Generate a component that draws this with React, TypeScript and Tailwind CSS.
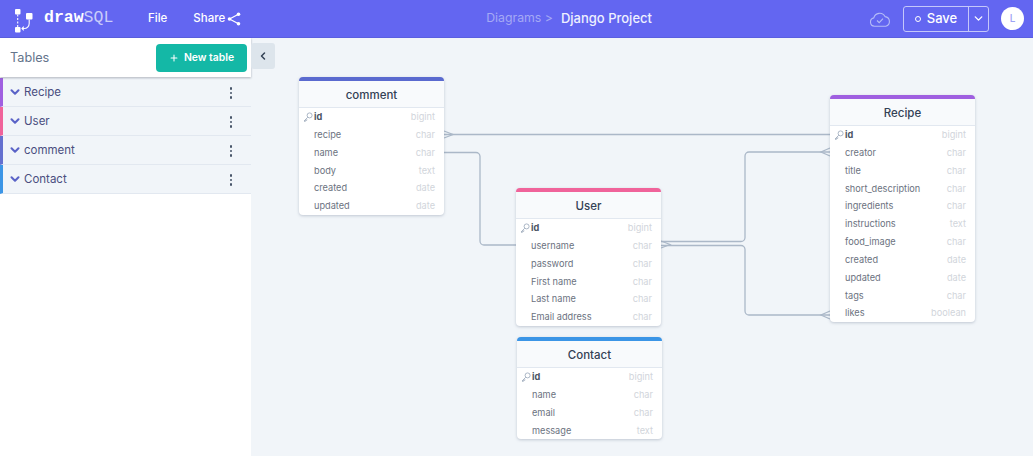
import { ChevronDown, ChevronLeft, Plus } from "lucide-react";

const font = { fontFamily: "Inter, 'Liberation Sans', sans-serif" };

const sidebarTables = [
  { name: "Recipe", border: "border-l-[#9f5fe0]" },
  { name: "User", border: "border-l-[#f0639a]" },
  { name: "comment", border: "border-l-[#6470cf]" },
  { name: "Contact", border: "border-l-[#3b95e6]" },
];

type Column = [string, string];

const diagramTables: {
  name: string;
  pos: string;
  bar: string;
  columns: Column[];
}[] = [
  {
    name: "comment",
    pos: "left-[48px] top-[39px]",
    bar: "border-t-[#5a6acf]",
    columns: [
      ["id", "bigint"],
      ["recipe", "char"],
      ["name", "char"],
      ["body", "text"],
      ["created", "date"],
      ["updated", "date"],
    ],
  },
  {
    name: "Recipe",
    pos: "left-[579px] top-[57px]",
    bar: "border-t-[#9f5fe0]",
    columns: [
      ["id", "bigint"],
      ["creator", "char"],
      ["title", "char"],
      ["short_description", "char"],
      ["ingredients", "char"],
      ["instructions", "text"],
      ["food_image", "char"],
      ["created", "date"],
      ["updated", "date"],
      ["tags", "char"],
      ["likes", "boolean"],
    ],
  },
  {
    name: "User",
    pos: "left-[265px] top-[150px]",
    bar: "border-t-[#f0639a]",
    columns: [
      ["id", "bigint"],
      ["username", "char"],
      ["password", "char"],
      ["First name", "char"],
      ["Last name", "char"],
      ["Email address", "char"],
    ],
  },
  {
    name: "Contact",
    pos: "left-[266px] top-[299px]",
    bar: "border-t-[#3b95e6]",
    columns: [
      ["id", "bigint"],
      ["name", "char"],
      ["email", "char"],
      ["message", "text"],
    ],
  },
];

function Logo() {
  return (
    <svg width="20" height="28" viewBox="0 0 20 28" fill="none" className="shrink-0">
      <rect x="1" y="4" width="5.5" height="5.5" rx="1" fill="#fff" />
      <rect x="1" y="22" width="5.5" height="5.5" rx="1" fill="#fff" />
      <rect x="12" y="8" width="6.5" height="6.5" rx="1" fill="#fff" />
      <path d="M3.7 9.5V22" stroke="#fff" strokeWidth="1.1" strokeDasharray="2 1.5" />
      <path d="M15.2 14.5v4a5 5 0 0 1-5 5H8" stroke="#fff" strokeWidth="1.1" />
      <path d="M9.8 21.6 8 23.5l1.8 1.9" stroke="#fff" strokeWidth="1.1" />
    </svg>
  );
}

function ShareIcon() {
  return (
    <svg width="14" height="14" viewBox="0 0 14 14" fill="none" className="ml-[2px]">
      <path d="M11.5 2.2 2.5 7l9 4.8" stroke="#fff" strokeWidth="1.2" />
      <circle cx="11.5" cy="2.2" r="1.8" fill="#fff" />
      <circle cx="2.5" cy="7" r="1.8" fill="#fff" />
      <circle cx="11.5" cy="11.8" r="1.8" fill="#fff" />
    </svg>
  );
}

function CloudCheck() {
  return (
    <svg width="22" height="18" viewBox="0 0 22 18" fill="none" stroke="#b5bcf7" strokeWidth="1.1">
      <path d="M5.5 16.2a4.2 4.2 0 0 1-.7-8.3A6 6 0 0 1 16 6.6a4.9 4.9 0 0 1 .8 9.6z" />
      <path d="M8 10.5l2.2 2.2 3.8-4" />
    </svg>
  );
}

function KeyIcon() {
  return (
    <svg width="10" height="10" viewBox="0 0 10 10" fill="none" stroke="#a3afbf" strokeWidth="0.9" className="absolute left-[4px]">
      <circle cx="6.6" cy="3.4" r="2.5" />
      <path d="M4.8 5.2 1 9l1.2.6.5-1.4 1 .2.2-1.1" />
    </svg>
  );
}

function Dots() {
  return (
    <div className="ml-auto flex flex-col gap-[2px]">
      <span className="size-[2.4px] rounded-full bg-[#475569]" />
      <span className="size-[2.4px] rounded-full bg-[#475569]" />
      <span className="size-[2.4px] rounded-full bg-[#475569]" />
    </div>
  );
}

function Header() {
  return (
    <header className="flex h-[38px] shrink-0 items-center border-b border-b-[#5a5fe0] bg-[#6366f1] pl-[14px] pr-[9px] text-white">
      <Logo />
      <div className="ml-[10px] flex w-[76px] items-baseline text-[16.5px] leading-none">
        <span className="font-['Liberation_Mono'] font-bold">draw</span>
        <span className="font-['Liberation_Mono'] text-[#c9ccfa]">SQL</span>
      </div>
      <span className="ml-[28px] text-[11.5px] font-medium">File</span>
      <span className="ml-[26px] flex items-center text-[11.5px] font-medium">
        Share
        <ShareIcon />
      </span>
      <div className="ml-[245px] flex items-center">
        <span className="text-[12.3px] text-[#a5a9f5]">Diagrams &gt;</span>
        <span className="ml-[8px] text-[13px] font-medium text-[#eef0ff]">Django Project</span>
      </div>
      <div className="ml-auto flex items-center">
        <CloudCheck />
        <div className="ml-[12px] flex h-[26px] items-stretch rounded-[3px] border border-[#c4c7fa]">
          <div className="flex w-[65px] items-center justify-center gap-[6px] border-r border-r-[#c4c7fa] text-[13px] font-medium">
            <span className="size-[6px] rounded-full border border-white" />
            Save
          </div>
          <div className="flex w-[19px] items-center justify-center">
            <ChevronDown size={13} strokeWidth={2.5} />
          </div>
        </div>
        <div className="ml-[12px] flex size-[23px] items-center justify-center rounded-full bg-white text-[10px] font-medium text-[#9ea3f5]">
          L
        </div>
      </div>
    </header>
  );
}

function Sidebar() {
  return (
    <aside className="flex w-[251px] shrink-0 flex-col bg-white">
      <div className="relative flex h-[39px] shrink-0 items-center justify-between pl-[10px] pr-[4px] shadow-[0_1px_2px_rgba(71,85,105,0.45)]">
        <span className="text-[12.7px] text-[#64748b]">Tables</span>
        <button className="flex h-[28px] w-[91px] items-center justify-center gap-[5px] rounded-[4px] bg-[#14b8a6] text-[10.4px] font-semibold text-white">
          <Plus size={10} strokeWidth={2.5} />
          New table
        </button>
      </div>
      <div className="mt-[1px]">
        {sidebarTables.map((t) => (
          <div
            key={t.name}
            className={`flex h-[29px] items-center border-b border-b-[#e2e8f0] border-l-[3px] bg-[#f1f5f9] pl-[5px] pr-[19px] pt-[2px] ${t.border}`}
          >
            <ChevronDown size={14} strokeWidth={3.5} className="-mt-[2px] text-[#5a63c7]" />
            <span className="ml-[2px] text-[11.5px] text-[#4a4e80]">{t.name}</span>
            <Dots />
          </div>
        ))}
      </div>
    </aside>
  );
}

function DiagramTable({ table }: { table: (typeof diagramTables)[number] }) {
  return (
    <div
      className={`absolute w-[145px] overflow-hidden rounded-[4px] border-t-[4px] bg-white shadow-[0_1px_3px_rgba(100,116,139,0.35)] ${table.pos} ${table.bar}`}
    >
      <div className="flex h-[27px] items-center justify-center border-b border-b-[#e2e8f0] bg-[#f8fafc] pt-[3px] text-[11.5px] font-medium text-[#334155]">
        {table.name}
      </div>
      <div>
        {table.columns.map(([name, type], i) => (
          <div key={name} className="relative flex h-[17.85px] items-center pl-[15px] pr-[9px] text-[9.2px]">
            {i === 0 && <KeyIcon />}
            <span className={i === 0 ? "font-bold text-[#4b5563]" : "text-[#6b7280]"}>{name}</span>
            <span className="ml-auto text-[#d1d5db]">{type}</span>
          </div>
        ))}
      </div>
    </div>
  );
}

function Relations() {
  const line = { stroke: "#abb8c8", strokeWidth: 1.3, fill: "none" };
  return (
    <svg className="absolute inset-0 size-full" {...line}>
      {/* comment.recipe to Recipe.id */}
      <path d="M193 96.5H579" />
      <path d="M193 93l9 3.5-9 3.5" />
      {/* comment.name to User.username */}
      <path d="M193 114.5H225a4 4 0 0 1 4 4V203a4 4 0 0 0 4 4h32" />
      {/* User to Recipe.creator */}
      <path d="M410 203.5H490a4 4 0 0 0 4-4V118a4 4 0 0 1 4-4h81" />
      {/* User to Recipe.likes */}
      <path d="M410 207.5H490a4 4 0 0 1 4 4V273a4 4 0 0 0 4 4h81" />
      <path d="M410 203l9 3.5-9 3.5" />
      <path d="M579 110l-9 4 9 4" />
      <path d="M579 273l-9 4 9 4" />
    </svg>
  );
}

export default function App() {
  return (
    <div className="flex h-[456px] w-[1033px] flex-col overflow-hidden bg-[#f1f5f9]" style={font}>
      <Header />
      <div className="flex min-h-0 flex-1">
        <Sidebar />
        <main className="relative flex-1">
          <button className="absolute left-0 top-[5px] flex h-[26px] w-[24px] items-center justify-center rounded-[3px] bg-[#dde5ec] text-[#334155]">
            <ChevronLeft size={12} strokeWidth={3} />
          </button>
          <Relations />
          {diagramTables.map((t) => (
            <DiagramTable key={t.name} table={t} />
          ))}
        </main>
      </div>
    </div>
  );
}
